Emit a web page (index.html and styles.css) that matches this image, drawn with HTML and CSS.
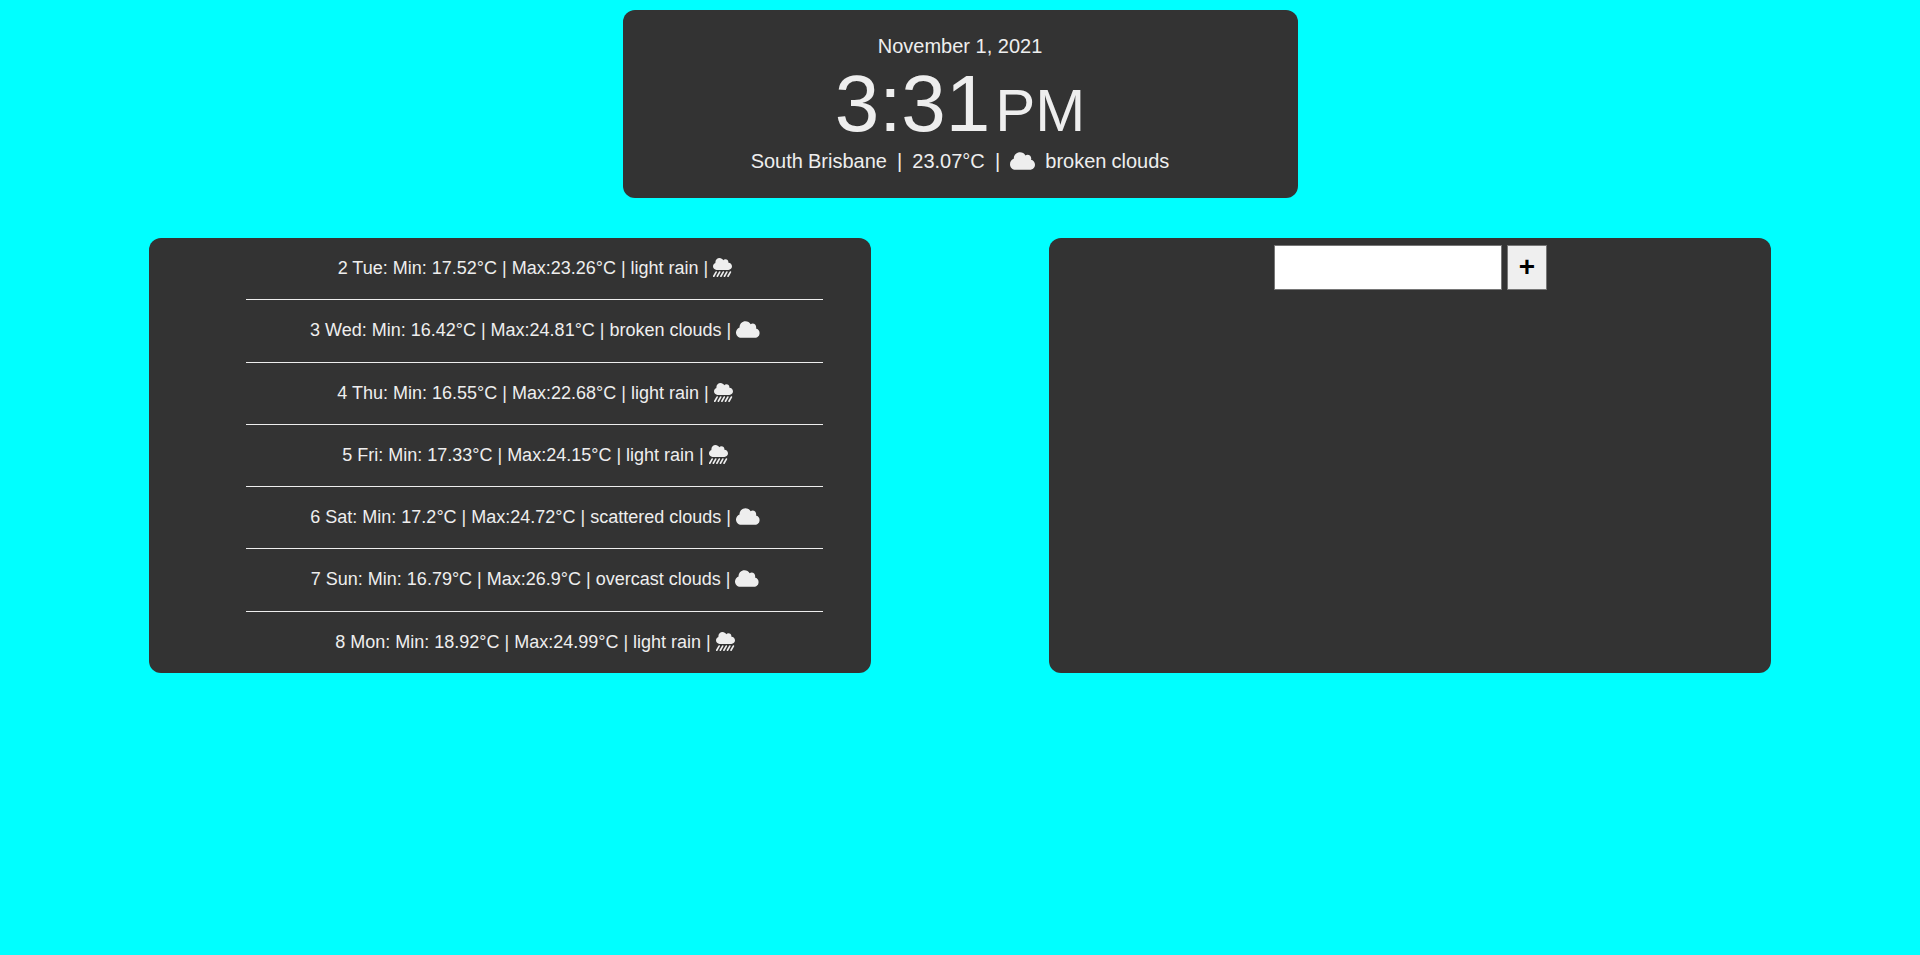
FILE: index.html
```html
<!DOCTYPE html>
<html lang="en">
<head>
<meta charset="utf-8">
<title>Dashboard</title>
<link rel="stylesheet" href="styles.css">
</head>
<body>
<svg class="sprite" aria-hidden="true">
  <symbol id="cloud" viewBox="0 0 640 512"><path d="M537.6 226.6c4.1-10.7 6.4-22.4 6.4-34.6 0-53-43-96-96-96-19.7 0-38.1 6-53.3 16.2C367 64.2 315.3 32 256 32c-88.4 0-160 71.6-160 160 0 2.7.1 5.4.2 8.1C40.2 219.8 0 273.2 0 336c0 79.5 64.5 144 144 144h368c70.7 0 128-57.3 128-128 0-61.9-44-113.6-102.4-125.4z"/></symbol>
  <symbol id="rain" viewBox="0 0 512 512">
    <path d="M416 128c-.6 0-1.1.2-1.6.2 1.1-5.2 1.6-10.6 1.6-16.2 0-44.2-35.8-80-80-80-24.6 0-46.3 11.3-61 28.8C256.4 24.8 219.3 0 176 0 114.1 0 64 50.1 64 112c0 7.3.8 14.3 2.1 21.2C27.8 145.8 0 181.5 0 224c0 53 43 96 96 96h320c53 0 96-43 96-96s-43-96-96-96z"/>
    <path d="M84 378l-64 114M180 378l-64 114M276 378l-64 114M372 378l-64 114M468 378l-64 114" fill="none" stroke="currentColor" stroke-width="44" stroke-linecap="round"/>
  </symbol>
</svg>
<header class="clock">
  <div class="date">November 1, 2021</div>
  <div class="time">3:31<span class="period">PM</span></div>
  <div class="weather">South Brisbane &nbsp;|&nbsp; 23.07°C &nbsp;|&nbsp; <svg class="icon cloud"><use href="#cloud"/></svg> &nbsp;broken clouds</div>
</header>
<main class="panels">
  <section class="panel">
    <ul class="forecast">
      <li>2 Tue: Min: 17.52°C | Max:23.26°C | light rain | <svg class="icon"><use href="#rain"/></svg></li>
      <li>3 Wed: Min: 16.42°C | Max:24.81°C | broken clouds | <svg class="icon cloud"><use href="#cloud"/></svg></li>
      <li>4 Thu: Min: 16.55°C | Max:22.68°C | light rain | <svg class="icon"><use href="#rain"/></svg></li>
      <li>5 Fri: Min: 17.33°C | Max:24.15°C | light rain | <svg class="icon"><use href="#rain"/></svg></li>
      <li>6 Sat: Min: 17.2°C | Max:24.72°C | scattered clouds | <svg class="icon cloud"><use href="#cloud"/></svg></li>
      <li>7 Sun: Min: 16.79°C | Max:26.9°C | overcast clouds | <svg class="icon cloud"><use href="#cloud"/></svg></li>
      <li>8 Mon: Min: 18.92°C | Max:24.99°C | light rain | <svg class="icon"><use href="#rain"/></svg></li>
    </ul>
  </section>
  <section class="panel">
    <form class="add">
      <input class="field" type="text" aria-label="New item">
      <button class="plus" type="button">+</button>
    </form>
  </section>
</main>
</body>
</html>
```

FILE: styles.css
```css
* { box-sizing: border-box; }
body {
  margin: 10px 8px 8px;
  background: #00ffff;
  color: #eee;
  font-family: Arial, "Liberation Sans", sans-serif;
}
.sprite { display: none; }
.icon {
  width: 1em;
  height: 1em;
  fill: currentColor;
  vertical-align: -0.15em;
}
.icon.cloud { width: 1.25em; }
.clock {
  width: 675px;
  height: 188px;
  margin: 0 auto;
  padding-top: 25px;
  border-radius: 12px;
  background: #333;
  text-align: center;
  font-size: 20px;
}
.date, .weather { line-height: 23px; }
.weather { word-spacing: -0.5px; }
.time {
  height: 92px;
  font-size: 80px;
  line-height: 92px;
}
.period { margin-left: 5px; font-size: 60px; }
.panels {
  display: flex;
  justify-content: center;
  gap: 178px;
  margin-top: 40px;
}
.panel {
  width: 722px;
  height: 435px;
  border-radius: 12px;
  background: #333;
}
.forecast {
  margin: 0;
  padding: 0 48px 0 97px;
  list-style: none;
  text-align: center;
  font-size: 18px;
}
.forecast .icon {
  width: 19px;
  height: 19px;
  margin-right: -1px;
  vertical-align: -3px;
}
.forecast .icon.cloud { width: 23.75px; }
.forecast li {
  height: 62.3px;
  padding-top: 19.95px;
  border-bottom: 1px solid #eee;
  line-height: 21px;
}
.forecast li:last-child { height: 60px; border-bottom: 0; }
.add {
  display: flex;
  justify-content: center;
  gap: 5px;
  padding-top: 7px;
}
.field {
  width: 228px;
  height: 45px;
  border: 1px solid #767676;
  background: #fff;
  font-size: 20px;
}
.plus {
  width: 40px;
  height: 45px;
  padding: 0 0 2px 1px;
  border: 1px solid #767676;
  background: #efefef;
  color: #000;
  font: bold 28px Arial, "Liberation Sans", sans-serif;
}
```
